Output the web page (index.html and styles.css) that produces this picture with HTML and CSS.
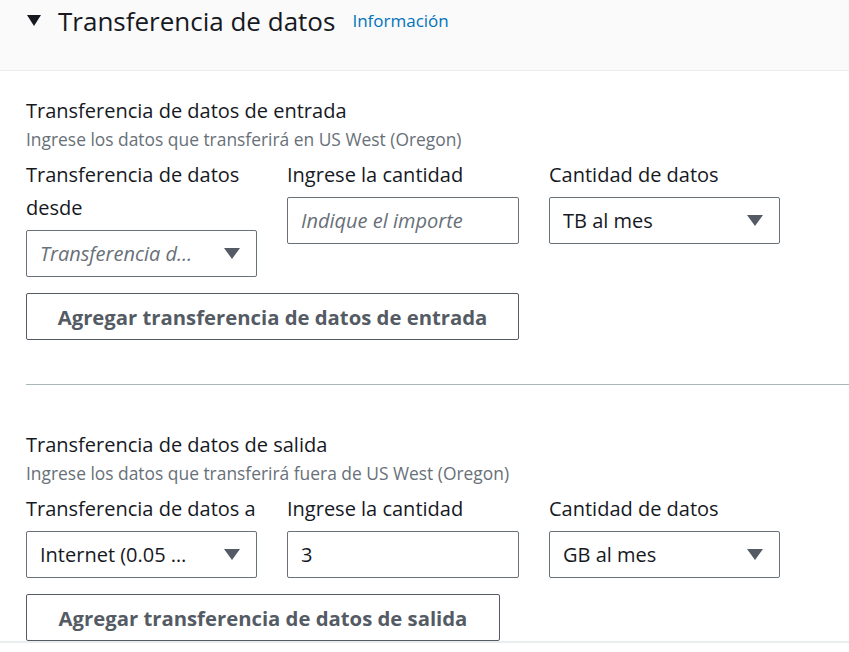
FILE: index.html
```html
<!DOCTYPE html>
<html lang="es">
<head>
<meta charset="utf-8">
<link rel="stylesheet" href="styles.css">
</head>
<body>
<div class="panel">
  <div class="panel-header">
    <svg class="caret" width="14" height="11" viewBox="0 0 14 11"><path d="M0 0H14L7 11Z" fill="#16191f"/></svg>
    <h2 class="title">Transferencia de datos</h2>
    <a class="info">Información</a>
  </div>
  <div class="panel-body">
    <section class="group">
      <h3 class="group-title">Transferencia de datos de entrada</h3>
      <p class="group-desc">Ingrese los datos que transferirá en US West (Oregon)</p>
      <div class="fields">
        <div class="field">
          <div class="label">Transferencia de datos desde</div>
          <div class="control select"><span class="value placeholder">Transferencia de datos</span><svg class="arrow" width="16" height="11" viewBox="0 0 16 11"><path d="M0 0H16L8 11Z" fill="#545b64"/></svg></div>
        </div>
        <div class="field">
          <div class="label">Ingrese la cantidad</div>
          <div class="control"><span class="value placeholder">Indique el importe</span></div>
        </div>
        <div class="field">
          <div class="label">Cantidad de datos</div>
          <div class="control select"><span class="value">TB al mes</span><svg class="arrow" width="16" height="11" viewBox="0 0 16 11"><path d="M0 0H16L8 11Z" fill="#545b64"/></svg></div>
        </div>
      </div>
      <button class="btn btn-in">Agregar transferencia de datos de entrada</button>
    </section>
    <hr class="divider">
    <section class="group">
      <h3 class="group-title">Transferencia de datos de salida</h3>
      <p class="group-desc">Ingrese los datos que transferirá fuera de US West (Oregon)</p>
      <div class="fields">
        <div class="field">
          <div class="label">Transferencia de datos a</div>
          <div class="control select"><span class="value">Internet (0.05 USD por GB)</span><svg class="arrow" width="16" height="11" viewBox="0 0 16 11"><path d="M0 0H16L8 11Z" fill="#545b64"/></svg></div>
        </div>
        <div class="field">
          <div class="label">Ingrese la cantidad</div>
          <div class="control"><span class="value">3</span></div>
        </div>
        <div class="field">
          <div class="label">Cantidad de datos</div>
          <div class="control select"><span class="value">GB al mes</span><svg class="arrow" width="16" height="11" viewBox="0 0 16 11"><path d="M0 0H16L8 11Z" fill="#545b64"/></svg></div>
        </div>
      </div>
      <button class="btn btn-out">Agregar transferencia de datos de salida</button>
    </section>
  </div>
</div>
</body>
</html>
```
FILE: styles.css
```css
* { box-sizing: border-box; }
html, body { margin: 0; padding: 0; background: #fff; }
body {
  font-family: "Open Sans", "Noto Sans", sans-serif;
  color: #16191f;
  width: 849px;
  height: 652px;
  overflow: hidden;
}
.panel { border-bottom: 2px solid #eaeded; }
.panel-header {
  height: 71px;
  background: #fafafa;
  border-bottom: 1px solid #eaeded;
  display: flex;
  align-items: flex-start;
  padding: 5px 0 0 27px;
}
.caret { margin-top: 10px; margin-right: 17px; flex: none; }
.title {
  margin: 0;
  font-size: 26px;
  font-weight: 400;
  line-height: 32px;
}
.info {
  margin-left: 17px;
  margin-top: 4px;
  font-size: 17px;
  line-height: 24px;
  color: #0073bb;
}
.panel-body { padding: 27px 0 0 26px; }
.group-title {
  margin: 0;
  font-size: 20px;
  font-weight: 400;
  line-height: 26px;
}
.group-desc {
  margin: 4px 0 0;
  font-size: 17.4px;
  line-height: 22px;
  color: #687078;
}
.fields {
  display: grid;
  grid-template-columns: 231px 232px 231px;
  column-gap: 30px;
  align-items: start;
  margin-top: 8px;
}
.label {
  font-size: 20px;
  line-height: 33px;
}
.control {
  margin-top: 6px;
  height: 47px;
  border: 1px solid #687078;
  border-radius: 2px;
  display: flex;
  align-items: center;
  padding: 0 16px 0 13px;
  font-size: 20px;
}
.value {
  flex: 1;
  min-width: 0;
  white-space: nowrap;
  overflow: hidden;
  text-overflow: ellipsis;
}
.placeholder { font-style: italic; color: #687078; }
.arrow { flex: none; margin-left: 28px; }
.btn {
  display: block;
  margin-top: 16px;
  height: 47px;
  padding: 0 20px;
  background: #fff;
  border: 1px solid #545b64;
  border-radius: 2px;
  font-family: inherit;
  font-size: 20.3px;
  font-weight: 700;
  color: #545b64;
  white-space: nowrap;
}
.btn-in { width: 493px; }
.btn-out { width: 474px; }
.divider {
  margin: 44px 0 0;
  border: 0;
  border-top: 1px solid #aab7b8;
}
.group + .divider + .group { margin-top: 47px; }
```
